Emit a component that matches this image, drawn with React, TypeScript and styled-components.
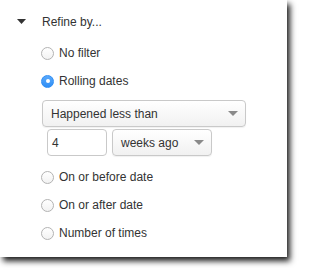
import React from "react";
import styled, { createGlobalStyle } from "styled-components";

const Global = createGlobalStyle`
  html, body {
    margin: 0;
    background: #fff;
  }
  body {
    font-family: "Liberation Sans", Arial, sans-serif;
    color: #333;
  }
`;

const Page = styled.div`
  width: 302px;
  height: 272px;
  background: #fff;
`;

const Panel = styled.div`
  width: 287px;
  height: 257px;
  box-sizing: border-box;
  background: #fff;
  padding: 13px 0 0 17px;
  box-shadow: 3px 4px 6px rgba(0, 0, 0, 0.9);
`;

const Header = styled.div`
  display: flex;
  align-items: center;
  height: 17px;
  font-size: 12px;
  gap: 16px;
`;

const Options = styled.div`
  display: flex;
  flex-direction: column;
  margin: 9px 0 0 24px;
`;

const Option = styled.label<{ $gap?: number }>`
  display: flex;
  align-items: center;
  height: 28px;
  gap: 5px;
  font-size: 12px;
  color: #333;
  margin-top: ${(p) => p.$gap ?? 0}px;
`;

const Radio = styled.span<{ $checked?: boolean }>`
  width: 13px;
  height: 13px;
  box-sizing: border-box;
  border-radius: 50%;
  display: flex;
  align-items: center;
  justify-content: center;
  border: 1px solid ${(p) => (p.$checked ? "#2f8ef5" : "#b3b3b3")};
  background: ${(p) =>
    p.$checked ? "linear-gradient(#5aa9fb, #2f8ef5)" : "linear-gradient(#fff, #f2f2f2)"};
  &::after {
    content: "";
    width: 4px;
    height: 4px;
    border-radius: 50%;
    background: #fff;
    display: ${(p) => (p.$checked ? "block" : "none")};
  }
`;

const Select = styled.div<{ $w: number }>`
  width: ${(p) => p.$w}px;
  height: 27px;
  box-sizing: border-box;
  border: 1px solid #c9c9c9;
  border-radius: 4px;
  background: linear-gradient(#ffffff, #f1f1f1);
  box-shadow: 0 1px 1px rgba(0, 0, 0, 0.06);
  display: flex;
  align-items: center;
  justify-content: space-between;
  padding: 0 7px 0 8px;
  font-size: 12px;
  color: #333;
`;

const Block = styled.div`
  margin-top: 5px;
  margin-left: 1px;
`;

const Row = styled.div`
  display: flex;
  gap: 5px;
  margin: 2px 0 0 5px;
`;

const NumberBox = styled.div`
  width: 60px;
  height: 27px;
  box-sizing: border-box;
  border: 1px solid #c9c9c9;
  border-radius: 4px;
  background: #fff;
  padding: 0 4px;
  display: flex;
  align-items: center;
  font-size: 12px;
  color: #333;
`;

const Caret = ({ color, w, h }: { color: string; w: number; h: number }) => (
  <svg width={w} height={h} viewBox={`0 0 ${w} ${h}`}>
    <path d={`M0 0 H${w} L${w / 2} ${h} Z`} fill={color} />
  </svg>
);

export default function App() {
  return (
    <Page>
      <Global />
      <Panel>
        <Header>
          <Caret color="#333" w={9} h={5} />
          <span>Refine by...</span>
        </Header>
        <Options>
          <Option>
            <Radio />
            No filter
          </Option>
          <Option>
            <Radio $checked />
            Rolling dates
          </Option>
          <Block>
            <Select $w={204}>
              <span>Happened less than</span>
              <Caret color="#8a8a8a" w={10} h={5} />
            </Select>
            <Row>
              <NumberBox>4</NumberBox>
              <Select $w={100}>
                <span>weeks ago</span>
                <Caret color="#8a8a8a" w={10} h={5} />
              </Select>
            </Row>
          </Block>
          <Option $gap={7}>
            <Radio />
            On or before date
          </Option>
          <Option>
            <Radio />
            On or after date
          </Option>
          <Option>
            <Radio />
            Number of times
          </Option>
        </Options>
      </Panel>
    </Page>
  );
}
